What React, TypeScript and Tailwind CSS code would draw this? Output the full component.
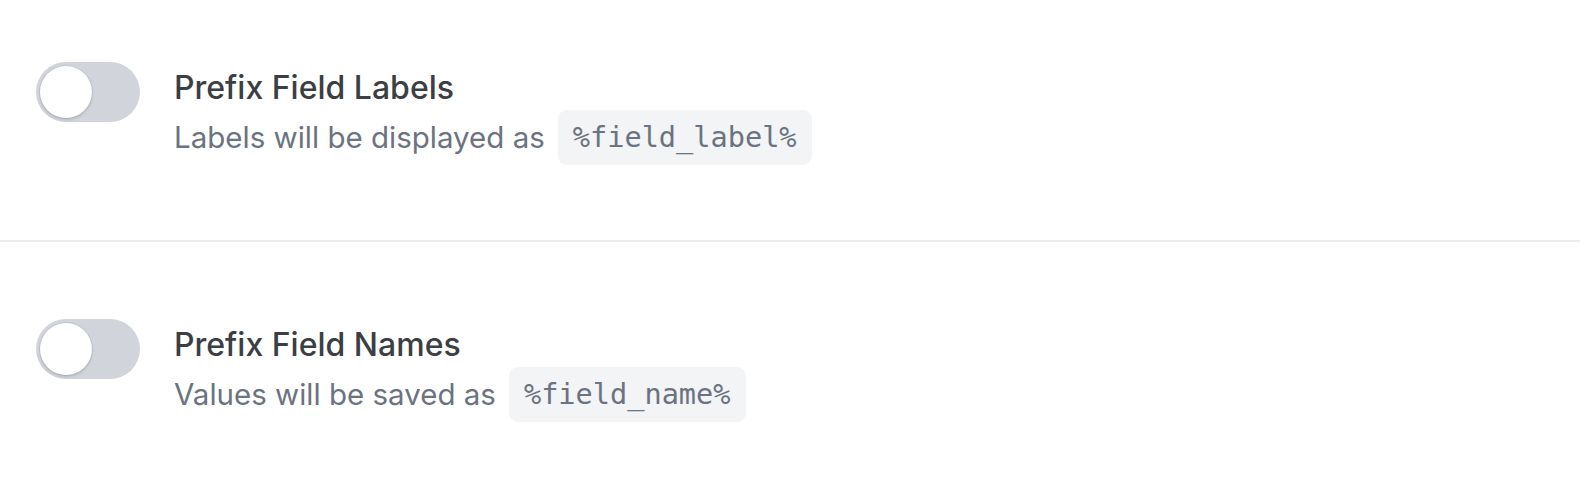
import React, { useState } from "react";

interface PrefixSettingProps {
  title: string;
  description: string;
  token: string;
  className?: string;
}

const Toggle: React.FC<{ checked: boolean; onChange: (v: boolean) => void }> = ({
  checked,
  onChange,
}) => {
  return (
    <button
      type="button"
      role="switch"
      aria-checked={checked}
      onClick={() => onChange(!checked)}
      className={`relative flex h-[60px] w-[104px] shrink-0 items-center rounded-full p-[4px] transition-colors ${
        checked ? "bg-blue-600" : "bg-[#d1d5db]"
      }`}
    >
      <span
        className={`block h-[52px] w-[52px] rounded-full bg-white shadow-[0_0_0_1px_rgba(0,0,0,0.07),0_2px_3px_rgba(0,0,0,0.12)] transition-transform ${
          checked ? "translate-x-[44px]" : "translate-x-0"
        }`}
      />
    </button>
  );
};

const PrefixSetting: React.FC<PrefixSettingProps> = ({
  title,
  description,
  token,
  className,
}) => {
  const [enabled, setEnabled] = useState(false);

  return (
    <div className={`flex items-start gap-[34px] pl-[36px] ${className ?? ""}`}>
      <Toggle checked={enabled} onChange={setEnabled} />
      <div className="flex flex-col">
        <span className="mt-[3px] text-[32px] font-medium leading-[45px] text-[#3b3e43]">
          {title}
        </span>
        <div className="flex h-[55px] items-center text-[29.5px] text-[#6b7280]">
          <span>{description}</span>
          <code className="ml-[13px] flex h-[55px] items-center rounded-[9px] bg-[#f3f4f6] px-[15px] font-['DejaVu_Sans_Mono',monospace] text-[28.6px] text-[#6b7280]">
            {token}
          </code>
        </div>
      </div>
    </div>
  );
};

const App: React.FC = () => {
  return (
    <div className="h-[488px] w-full overflow-hidden bg-white font-['Inter','Noto_Sans',sans-serif]">
      <PrefixSetting
        className="pt-[62px] pb-[75px]"
        title="Prefix Field Labels"
        description="Labels will be displayed as"
        token="%field_label%"
      />
      <div className="h-[2px] w-full bg-[#ebebeb]" />
      <PrefixSetting
        className="pt-[77px]"
        title="Prefix Field Names"
        description="Values will be saved as"
        token="%field_name%"
      />
    </div>
  );
};

export default App;
